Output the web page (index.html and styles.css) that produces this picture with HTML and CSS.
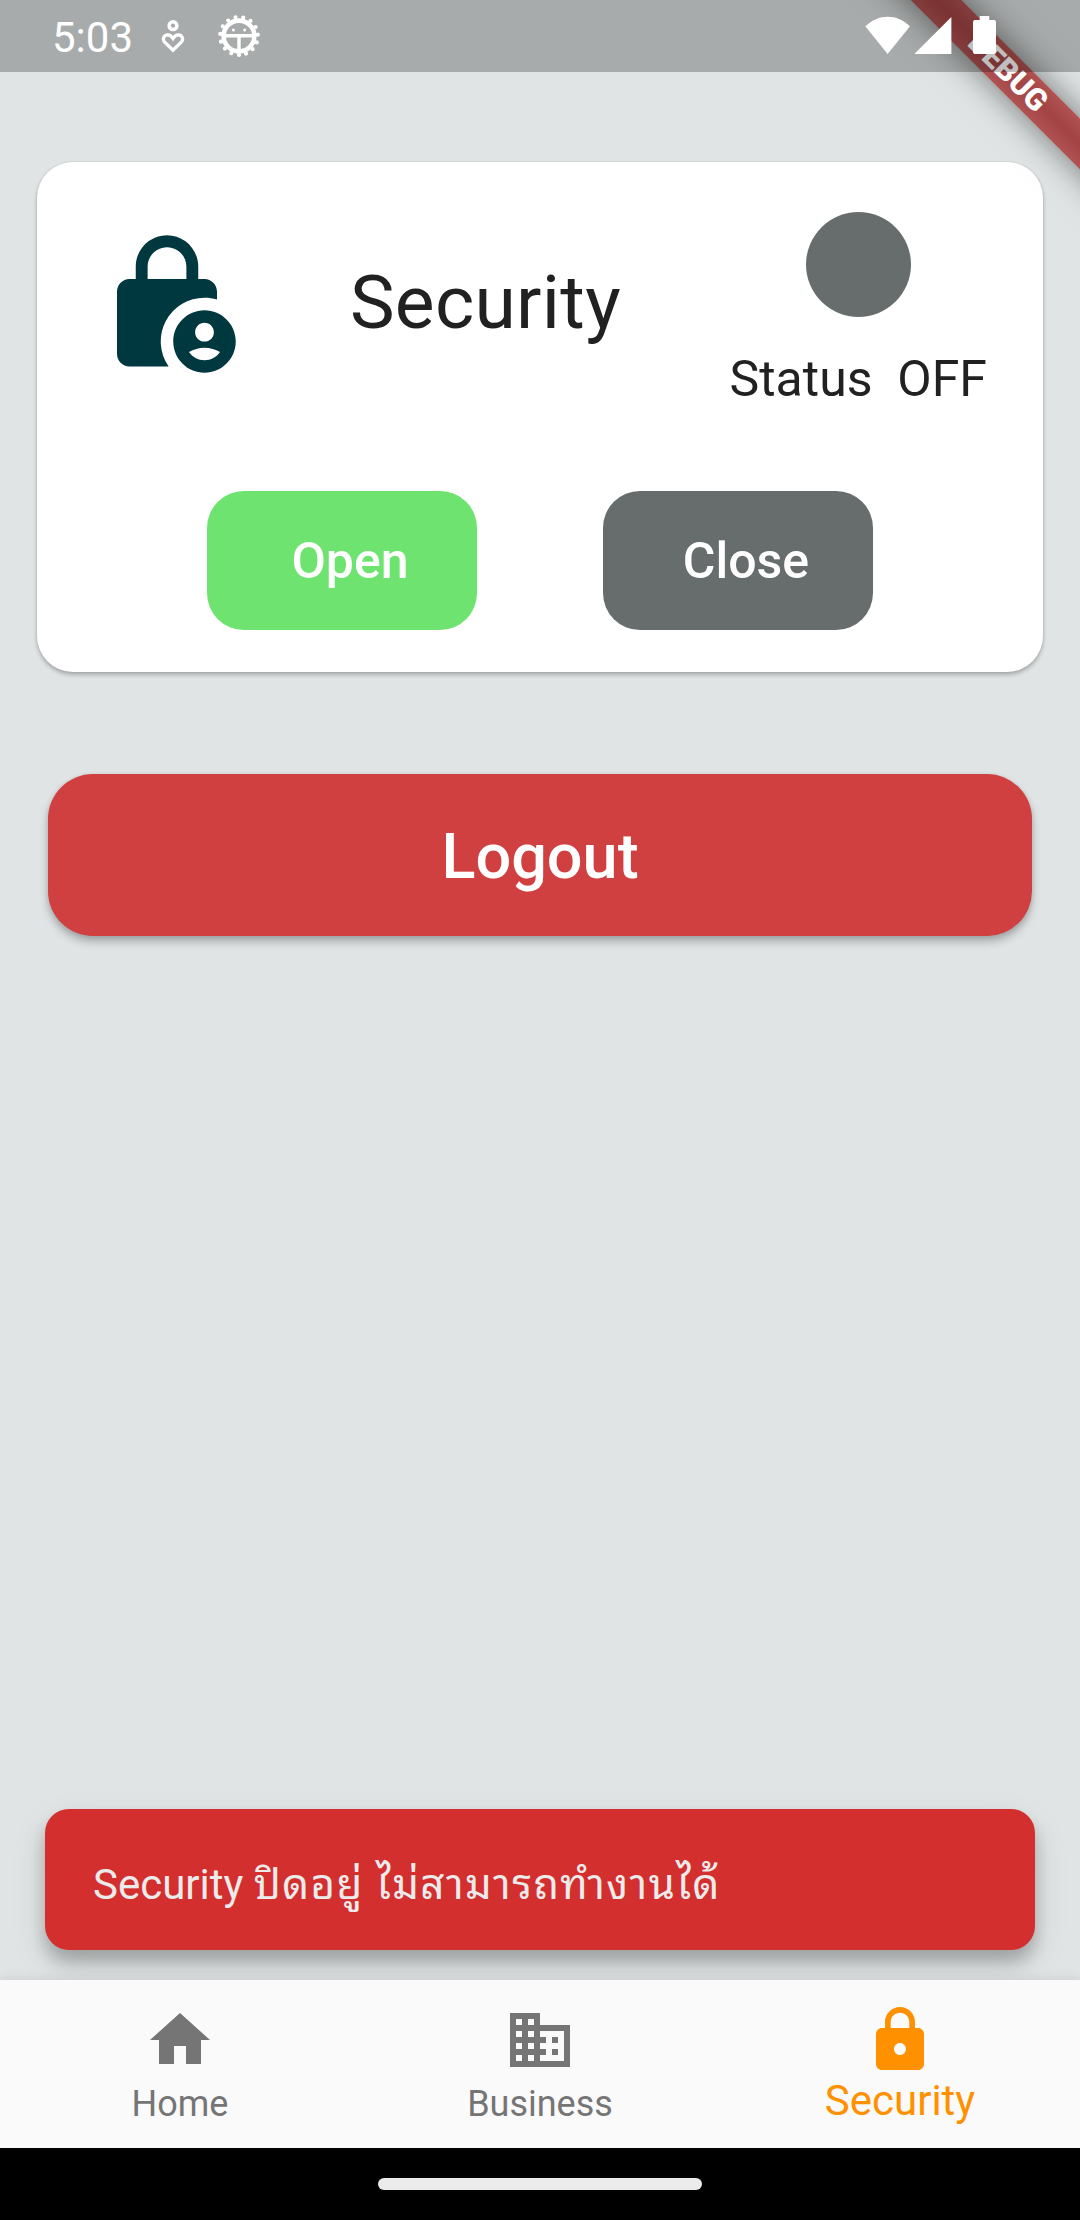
FILE: index.html
```html
<!DOCTYPE html>
<html lang="th">
<head>
    <meta charset="UTF-8">
    <meta name="viewport" content="width=device-width, initial-scale=1.0">
    <title>Security</title>
    <link rel="stylesheet" href="styles.css">
</head>
<body>
    <div class="debug-corner">
        <div class="debug-banner">DEBUG</div>
    </div>

    <header class="status-bar">
        <span class="time">5:03</span>
        <svg class="icon-heart" width="24" height="36" viewBox="0 0 24 36" fill="none" stroke="#fff">
            <circle cx="12" cy="7.7" r="3.9" stroke-width="3.5"/>
            <path d="M12 32.2L3.7 24.2C1.2 21.6 2.6 16.8 6.6 16.8C9 16.8 10.6 18.2 12 20.4C13.4 18.2 15 16.8 17.4 16.8C21.4 16.8 22.8 21.6 20.3 24.2Z" stroke-width="3.3"/>
        </svg>
        <svg class="icon-bug" width="44" height="44" viewBox="0 0 44 44" fill="none" stroke="#fff">
            <circle cx="22" cy="22" r="15.4" stroke-width="4.6"/>
            <circle cx="22" cy="22" r="18.9" stroke-width="4.2" stroke-linecap="round" stroke-dasharray="0 7.917" transform="rotate(90 22 22)"/>
            <path d="M8 21.8H36M22 22V36" stroke-width="3.4"/>
            <circle cx="16.4" cy="15.9" r="1.5" fill="#fff" stroke="none"/>
            <circle cx="27.6" cy="15.9" r="1.5" fill="#fff" stroke="none"/>
        </svg>
        <div class="system-icons">
            <svg width="132" height="40" viewBox="0 0 132 40" fill="#fff">
                <path d="M1.3 11.3C14.5 -1.6 33 -1.6 46 11.3L23.6 39Z"/>
                <path d="M50.3 39H87.4V2Z"/>
                <path d="M115.7 1h9.6v4h4.7q2 0 2 2v30q0 2-2 2h-19q-2 0-2-2v-30q0-2 2-2h4.7z"/>
            </svg>
        </div>
    </header>

    <main class="content">
        <section class="card">
            <div class="card-header">
                <svg class="lock-person" viewBox="0 0 24 24" fill="#003840">
                    <path d="M18 11c.7 0 1.37.1 2 .29V10c0-1.1-.9-2-2-2h-1V6c0-2.76-2.24-5-5-5S7 3.24 7 6v2H6c-1.1 0-2 .9-2 2v10c0 1.1.9 2 2 2h6.26A6.995 6.995 0 0 1 18 11zM8.9 6c0-1.71 1.39-3.1 3.1-3.1s3.1 1.39 3.1 3.1v2H8.9V6z"/>
                    <path d="M18 13c-2.76 0-5 2.24-5 5s2.24 5 5 5 5-2.24 5-5-2.24-5-5-5zm0 2c.83 0 1.5.67 1.5 1.5S18.83 18 18 18s-1.5-.67-1.5-1.5.67-1.5 1.5-1.5zm0 6c-1.03 0-1.94-.52-2.48-1.32.73-.42 1.57-.68 2.48-.68s1.75.26 2.48.68C19.94 20.48 19.03 21 18 21z"/>
                </svg>
                <h1 class="card-title">Security</h1>
                <div class="status">
                    <div class="status-light"></div>
                    <span class="status-text">Status&nbsp; OFF</span>
                </div>
            </div>
            <div class="card-actions">
                <button class="btn btn-open">Open</button>
                <button class="btn btn-close">Close</button>
            </div>
        </section>

        <button class="btn-logout">Logout</button>

        <div class="snackbar">Security <span class="thai">ปิดอยู่ ไม่สามารถทำงานได้</span></div>
    </main>

    <nav class="bottom-nav">
        <a class="nav-item">
            <svg viewBox="0 0 24 24"><path d="M10 20v-6h4v6h5v-8h3L12 3 2 12h3v8z"/></svg>
            <span>Home</span>
        </a>
        <a class="nav-item">
            <svg viewBox="0 0 24 24"><path d="M12 7V3H2v18h20V7H12zM6 19H4v-2h2v2zm0-4H4v-2h2v2zm0-4H4V9h2v2zm0-4H4V5h2v2zm4 12H8v-2h2v2zm0-4H8v-2h2v2zm0-4H8V9h2v2zm0-4H8V5h2v2zm10 12h-8v-2h2v-2h-2v-2h2v-2h-2V9h8v10zm-2-8h-2v2h2v-2zm0 4h-2v2h2v-2z"/></svg>
            <span>Business</span>
        </a>
        <a class="nav-item active">
            <svg viewBox="0 0 24 24"><path d="M18 8h-1V6c0-2.76-2.24-5-5-5S7 3.24 7 6v2H6c-1.1 0-2 .9-2 2v10c0 1.1.9 2 2 2h12c1.1 0 2-.9 2-2V10c0-1.1-.9-2-2-2zm-6 9c-1.1 0-2-.9-2-2s.9-2 2-2 2 .9 2 2-.9 2-2 2zm3.1-9H8.9V6c0-1.71 1.39-3.1 3.1-3.1 1.71 0 3.1 1.39 3.1 3.1v2z"/></svg>
            <span>Security</span>
        </a>
    </nav>

    <footer class="gesture-bar">
        <div class="handle"></div>
    </footer>
</body>
</html>
```

FILE: styles.css
```css
* {
    box-sizing: border-box;
}
body {
    margin: 0;
    height: 2220px;
    display: flex;
    flex-direction: column;
    position: relative;
    background-color: #e0e4e4;
    font-family: Roboto, "Noto Sans", sans-serif;
    color: #212121;
}
button {
    border: none;
    font-family: inherit;
    color: #fff;
}

/* status bar */
.status-bar {
    position: relative;
    z-index: 3;
    height: 72px;
    flex-shrink: 0;
    display: flex;
    align-items: flex-start;
    padding-left: 52px;
    background-color: rgba(0, 0, 0, 0.25);
}
.time {
    width: 109px;
    padding-top: 13px;
    font-size: 42px;
    line-height: 49px;
    color: #fff;
}
.icon-heart {
    margin-top: 18px;
}
.icon-bug {
    margin: 14px 0 0 32px;
}
.system-icons {
    margin: 15px 84px 0 auto;
}

/* debug ribbon */
.debug-corner {
    position: absolute;
    z-index: 2;
    top: 0;
    right: 0;
    width: 260px;
    height: 260px;
    overflow: hidden;
}
.debug-banner {
    position: absolute;
    top: 54px;
    left: 8px;
    width: 360px;
    height: 36px;
    transform: rotate(45deg);
    background: linear-gradient(#b05252, #a34343, #b05252);
    box-shadow: 0 0 34px rgba(0, 0, 0, 0.5);
    color: #fff;
    font-size: 30.6px;
    font-weight: 900;
    line-height: 36px;
    text-align: center;
}

.content {
    flex: 1;
    display: flex;
    flex-direction: column;
    padding-top: 90px;
}

/* security card */
.card {
    margin: 0 37px;
    padding: 50px 56px 42px 55px;
    border-radius: 36px;
    background-color: #fff;
    box-shadow: 0 3px 4px rgba(0, 0, 0, 0.24), 0 0 3px rgba(0, 0, 0, 0.1);
}
.card-header {
    height: 184px;
    display: flex;
    align-items: center;
}
.lock-person {
    width: 150px;
    height: 150px;
}
.card-title {
    margin: 0 0 4px 108px;
    font-size: 75px;
    font-weight: 400;
    line-height: 88px;
    letter-spacing: 0.3px;
}
.status {
    align-self: flex-start;
    margin-left: auto;
    display: flex;
    flex-direction: column;
    align-items: center;
    gap: 32px;
}
.status-light {
    width: 105px;
    height: 105px;
    border-radius: 50%;
    background-color: #676d6d;
}
.status-text {
    font-size: 50px;
    line-height: 60px;
}
.card-actions {
    display: flex;
    justify-content: center;
    gap: 126px;
    margin-top: 95px;
}
.btn {
    width: 270px;
    height: 139px;
    padding: 0 0 0 17px;
    border-radius: 37px;
    font-size: 50px;
    font-weight: 500;
}
.btn-open {
    background-color: #6ee36f;
}
.btn-close {
    background-color: #676d6d;
}

.btn-logout {
    height: 162px;
    margin: 102px 48px 0;
    padding-top: 3px;
    border-radius: 45px;
    background-color: #d04041;
    font-size: 63px;
    font-weight: 500;
    box-shadow: 0 6px 8px rgba(0, 0, 0, 0.24), 0 1px 5px rgba(0, 0, 0, 0.1);
}

.snackbar {
    height: 141px;
    margin: auto 45px 30px;
    padding: 0 48px;
    border-radius: 24px;
    background-color: #d32f2f;
    color: #ebebeb;
    font-size: 42px;
    line-height: 151px;
    white-space: nowrap;
    box-shadow: 0 12px 16px rgba(0, 0, 0, 0.22), 0 14px 36px rgba(0, 0, 0, 0.1);
}
.thai {
    font-family: "Noto Sans Thai Looped", "Droid Sans Thai", Loma, Garuda, Waree, "Noto Sans Thai", sans-serif;
    line-height: 1;
    letter-spacing: 1.4px;
}

/* bottom navigation */
.bottom-nav {
    position: relative;
    height: 168px;
    flex-shrink: 0;
    display: flex;
    background-color: #fafafa;
    box-shadow: 0 0 12px rgba(0, 0, 0, 0.1);
}
.nav-item {
    flex: 1;
    display: flex;
    flex-direction: column;
    align-items: center;
    padding-top: 24px;
    color: #757575;
    font-size: 36px;
    line-height: 42px;
}
.nav-item svg {
    width: 72px;
    height: 72px;
    margin-bottom: 7px;
    fill: currentColor;
}
.nav-item.active {
    color: #ff9100;
    font-size: 42px;
    line-height: 49px;
}
.nav-item.active svg {
    margin-bottom: 0;
}

.gesture-bar {
    height: 72px;
    flex-shrink: 0;
    display: flex;
    justify-content: center;
    align-items: center;
    background-color: #000;
}
.handle {
    width: 324px;
    height: 12px;
    border-radius: 6px;
    background-color: #ebebeb;
}
```
